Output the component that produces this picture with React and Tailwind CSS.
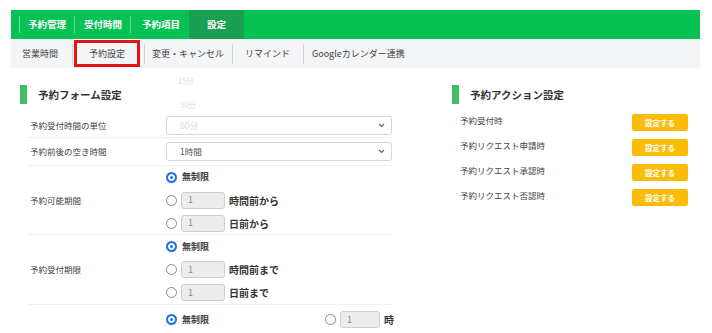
import React from "react";

const jp = { fontFamily: '"Noto Sans CJK JP", "Noto Sans", sans-serif' };

const Radio = ({ checked }) => (
    <span
        className={
            "inline-block w-[11px] h-[11px] rounded-full shrink-0 " +
            (checked ? "bg-[#1a73e8] border-[2px] border-[#1a73e8] shadow-[inset_0_0_0_2px_white]" : "border border-[#8a8a8a] bg-white")
        }
    />
);

const NumInput = ({ w = "w-[44px]" }) => (
    <span className={"inline-flex items-center h-[17px] rounded-[3px] border border-[#cfcfcf] bg-[#ededed] pl-[6px] text-[9px] text-[#888] " + w}>1</span>
);

const RadioLine = ({ checked, suffix }) => (
    <div className="flex items-center h-[23px] whitespace-nowrap shrink-0">
        <Radio checked={checked} />
        {suffix === undefined ? (
            <span className="ml-[5px] text-[9px] text-[#444] font-semibold">無制限</span>
        ) : (
            <>
                <span className="ml-[4px]"><NumInput /></span>
                <span className="ml-[4px] text-[10px] text-[#333] font-semibold">{suffix}</span>
            </>
        )}
    </div>
);

const Select = ({ value, faded }) => (
    <div className="flex items-center justify-between w-[226px] h-[19px] border border-[#d6d6d6] rounded-[3px] bg-white px-[13px] shrink-0">
        <span className={"text-[8.5px] " + (faded ? "text-[#d8d8d8]" : "text-[#555]")}>{value}</span>
        <svg width="7" height="5" viewBox="0 0 7 5" className="-mr-[7px]">
            <path d="M1 1l2.5 2.5L6 1" fill="none" stroke="#666" strokeWidth="1.2" />
        </svg>
    </div>
);

const SectionTitle = ({ children }) => (
    <div className="flex items-center h-[19px]">
        <span className="w-[7px] h-[19px] bg-[#3fbf62]" />
        <span className="ml-[11px] text-[10.5px] text-[#333] font-semibold">{children}</span>
    </div>
);

const Label = ({ children }) => (
    <span className="w-[138px] pl-[2px] shrink-0 whitespace-nowrap">{children}</span>
);

const actions = ["予約受付時", "予約リクエスト申請時", "予約リクエスト承認時", "予約リクエスト否認時"];

export default function App() {
    return (
        <div className="relative w-[712px] h-[333px] overflow-hidden bg-white" style={jp}>
            <div className="ml-[11px] mt-[10px] w-[689px]">
                {/* main tabs */}
                <div className="flex items-stretch h-[29px] bg-[#06c154] text-white text-[9.5px] font-bold">
                    <div className="w-[8px]" />
                    <div className="flex items-center border-l border-white/40 pl-[8px] pr-[8px] my-[6px]">予約管理</div>
                    <div className="flex items-center border-l border-white/40 pl-[9px] pr-[8px] my-[6px]">受付時間</div>
                    <div className="flex items-center border-l border-white/40 pl-[11px] pr-[9px] my-[6px]">予約項目</div>
                    <div className="flex items-center justify-center w-[55px] bg-[#1a9e51]">設定</div>
                </div>
                {/* sub tabs */}
                <div className="flex items-center h-[29px] bg-[#f4f5f7] text-[9px] text-[#444] whitespace-nowrap">
                    <div className="pl-[11px] w-[61px]">営業時間</div>
                    <span className="w-px h-[20px] bg-[#d4d4d4]" />
                    <div className="ml-[1px] flex items-center justify-center w-[66px] h-[27px] border-[3px] border-[#e3131b] bg-[#f4f5f7]">予約設定</div>
                    <span className="ml-[4px] w-px h-[20px] bg-[#d4d4d4]" />
                    <div className="pl-[7px] w-[87px]">変更・キャンセル</div>
                    <span className="w-px h-[20px] bg-[#d4d4d4]" />
                    <div className="pl-[12px] w-[70px]">リマインド</div>
                    <span className="w-px h-[20px] bg-[#d4d4d4]" />
                    <div className="pl-[8px]">Googleカレンダー連携</div>
                </div>
            </div>

            <div className="flex mt-[17px]">
                {/* left column */}
                <div className="ml-[20px] w-[372px] shrink-0">
                    <SectionTitle>予約フォーム設定</SectionTitle>
                    <div className="mt-[9px] ml-[8px] w-[364px] text-[8.5px] text-[#444]">
                        <div className="flex items-center h-[25px] border-b border-[#efefef]">
                            <Label>予約受付時間の単位</Label>
                            <Select value="60分" faded />
                        </div>
                        <div className="flex items-center h-[28px] border-b border-[#efefef]">
                            <Label>予約前後の空き時間</Label>
                            <Select value="1時間" />
                        </div>
                        <div className="flex items-center h-[69px] border-b border-[#efefef]">
                            <Label>予約可能期間</Label>
                            <div>
                                <RadioLine checked />
                                <RadioLine suffix="時間前から" />
                                <RadioLine suffix="日前から" />
                            </div>
                        </div>
                        <div className="flex items-center h-[70px] border-b border-[#efefef]">
                            <Label>予約受付期限</Label>
                            <div>
                                <RadioLine checked />
                                <RadioLine suffix="時間前まで" />
                                <RadioLine suffix="日前まで" />
                            </div>
                        </div>
                        <div className="flex items-start pt-[3px]">
                            <Label />
                            <RadioLine checked />
                            <div className="ml-[116px] flex items-center h-[23px] shrink-0 whitespace-nowrap">
                                <Radio />
                                <span className="ml-[4px]"><NumInput w="w-[40px]" /></span>
                                <span className="ml-[4px] text-[10px] text-[#333] font-semibold">時</span>
                            </div>
                        </div>
                    </div>
                </div>

                {/* right column */}
                <div className="ml-[60px] w-[248px] shrink-0">
                    <SectionTitle>予約アクション設定</SectionTitle>
                    <div className="mt-[6px] ml-[8px]">
                        {actions.map((a) => (
                            <div key={a} className="flex items-center justify-between h-[25px] w-[228px]">
                                <span className="text-[8.5px] text-[#444] -mt-[5px] whitespace-nowrap">{a}</span>
                                <span className="flex items-center justify-center w-[56px] h-[17px] rounded-[2px] bg-[#fcbd0a] text-white text-[7.5px] font-bold">設定する</span>
                            </div>
                        ))}
                    </div>
                </div>
            </div>

            {/* faded dropdown remnants */}
            <div className="absolute left-[178px] top-[75px] text-[7.5px] text-[#dedede]">15分</div>
            <div className="absolute left-[180px] top-[99px] text-[7.5px] text-[#dedede]">30分</div>
        </div>
    );
}
